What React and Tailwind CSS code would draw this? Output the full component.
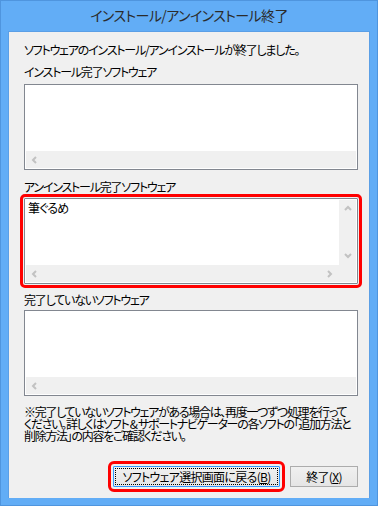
import React from 'react';

const jp = { fontFamily: '"Noto Sans CJK JP", "Noto Sans", sans-serif', fontFeatureSettings: '"palt"' };

function Chevron({ dir }) {
  const paths = {
    left: 'M5 1 L2 4 L5 7',
    right: 'M2 1 L5 4 L2 7',
    up: 'M1 5 L4 2 L7 5',
    down: 'M1 2 L4 5 L7 2',
  };
  return (
    <svg width="8" height="8" viewBox="0 0 8 8" className="block">
      <path d={paths[dir]} fill="none" stroke="#c2c2c2" strokeWidth="2" />
    </svg>
  );
}

function ListBox({ items = [], vertical = false, showRight = false, className = '' }) {
  return (
    <div className={`h-[86px] border border-[#828790] bg-white p-[1px] flex flex-col ${className}`}>
      <div className="flex-1 flex min-h-0">
        <div className="flex-1 px-[2px] pt-[1px] text-[12px] leading-[14px] tracking-[-0.8px] text-black" style={jp}>
          {items.map((it) => (
            <div key={it}>{it}</div>
          ))}
        </div>
        {vertical && (
          <div className="w-[17px] bg-[#f0f0f0] flex flex-col items-center justify-between py-[5px]">
            <Chevron dir="up" />
            <Chevron dir="down" />
          </div>
        )}
      </div>
      <div className="h-[17px] bg-[#f0f0f0] flex items-center justify-between pl-[5px] pr-[5px]">
        <Chevron dir="left" />
        {showRight && (
          <div className={vertical ? 'mr-[17px]' : ''}>
            <Chevron dir="right" />
          </div>
        )}
      </div>
    </div>
  );
}

function Label({ children, className = '' }) {
  return (
    <div className={`h-[12px] leading-[12px] text-[12px] tracking-[-1.2px] text-black whitespace-nowrap ${className}`} style={jp}>
      {children}
    </div>
  );
}

export default function App() {
  return (
    <div className="w-[378px] h-[506px] bg-[#62adf6] border border-[#4f95de] flex flex-col">
      {/* Title bar */}
      <div className="h-[30px] flex items-center justify-center text-[14px] tracking-[-0.6px] text-[#2b2b2b] pb-[1px]" style={jp}>
        インストール/アンインストール終了
      </div>

      {/* Client area */}
      <div className="mx-[7px] h-[467px] bg-[#f0f0f0] border-t border-l border-r border-[#5b9fe6] pl-[15px] pr-[11px]">
        <Label className="mt-[12px]">ソフトウェアのインストール/アンインストールが終了しました。</Label>
        <Label className="mt-[10px]">インストール完了ソフトウェア</Label>
        <ListBox className="mt-[6px]" />

        <Label className="mt-[11px]">アンインストール完了ソフトウェア</Label>
        <ListBox
          className="mt-[5px] outline-[3px] outline-solid outline-[#ff0000] outline-offset-[1px] rounded-[1px]"
          items={['筆ぐるめ']}
          vertical
          showRight
        />

        <Label className="mt-[10px]">完了していないソフトウェア</Label>
        <ListBox className="mt-[4px]" />

        <div className="mt-[10px] text-[12px] leading-[12px] tracking-[-1.3px] text-black whitespace-nowrap" style={jp}>
          <div>※完了していないソフトウェアがある場合は、再度一つずつ処理を行って</div>
          <div>ください。詳しくはソフト &amp; サポートナビゲーターの各ソフトの「追加方法と</div>
          <div>削除方法」の内容をご確認ください。</div>
        </div>

        <div className="mt-[24px] flex justify-end gap-[10px]">
          <div className="w-[167px] h-[21px] border border-[#3399ff] bg-gradient-to-b from-[#f0f0f0] to-[#e5e5e5] p-[1px] outline-[3px] outline-solid outline-[#ff0000] outline-offset-[2px] rounded-[1px]">
            <div className="h-full border border-dotted border-black flex items-center justify-center text-[12px] tracking-[-0.7px] text-black" style={jp}>
              ソフトウェア選択画面に戻る(<span className="underline">B</span>)
            </div>
          </div>
          <div className="w-[68px] h-[21px] border border-[#acacac] bg-gradient-to-b from-[#f0f0f0] to-[#e5e5e5] flex items-center justify-center text-[12px] tracking-[-0.7px] text-black" style={jp}>
            終了(<span className="underline">X</span>)
          </div>
        </div>
      </div>
    </div>
  );
}
